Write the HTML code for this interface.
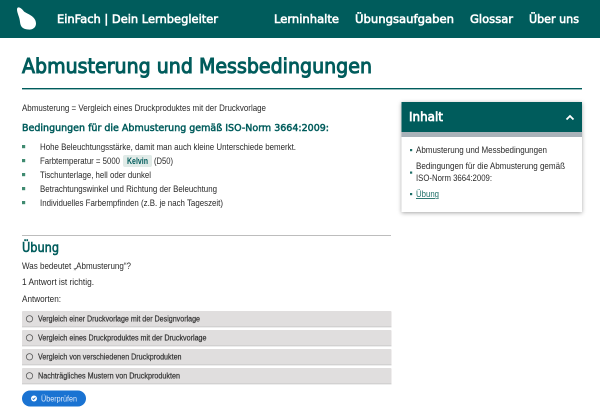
<!DOCTYPE html>
<html lang="de">
<head>
<meta charset="utf-8">
<title>Abmusterung und Messbedingungen</title>
<style>
html,body{margin:0;padding:0;background:#fff;width:600px;height:419px;overflow:hidden}
svg{display:block}
text{font-family:"Liberation Sans",sans-serif;fill:#2a2a2a;font-size:9.2px}
.q{font-family:"DejaVu Sans",sans-serif;paint-order:stroke}
.h{fill:#fff;stroke:#fff;stroke-width:.6px;font-size:11.5px}
.t{fill:#005c5c;stroke:#005c5c}
.a{font-size:8px;fill:#333;stroke:#333;stroke-width:.2px}
</style>
</head>
<body>
<svg width="600" height="419" viewBox="0 0 600 419" xmlns="http://www.w3.org/2000/svg">
<defs>
<filter id="s" x="-10%" y="-10%" width="120%" height="125%"><feDropShadow dx="0" dy="1" stdDeviation="2" flood-color="#000" flood-opacity=".35"/></filter>
</defs>
<rect width="600" height="38" fill="#005c5c"/>
<path d="M18 7.500C20 7 22 9 24 11.500C27 14 36 16 36 23.500C36 28 32 30 28 29.500C23 29 20.500 27 20 22C19.600 17 17 13 17 9.500C17 8.500 17.300 7.700 18 7.500Z" fill="#fff"/>
<text class="q h" x="57" y="23" textLength="161" lengthAdjust="spacingAndGlyphs">EinFach | Dein Lernbegleiter</text>
<text class="q h" x="274" y="23" textLength="65" lengthAdjust="spacingAndGlyphs">Lerninhalte</text>
<text class="q h" x="355" y="23" textLength="99" lengthAdjust="spacingAndGlyphs">Übungsaufgaben</text>
<text class="q h" x="470" y="23" textLength="43" lengthAdjust="spacingAndGlyphs">Glossar</text>
<text class="q h" x="529" y="23" textLength="50" lengthAdjust="spacingAndGlyphs">Über uns</text>

<text class="q t" x="22" y="73" style="font-size:20.500px;stroke-width:1px" textLength="350" lengthAdjust="spacingAndGlyphs">Abmusterung und Messbedingungen</text>
<rect x="22" y="88" width="560" height="1.400" fill="#005c5c"/>

<text x="22" y="111" textLength="244" lengthAdjust="spacingAndGlyphs">Abmusterung = Vergleich eines Druckproduktes mit der Druckvorlage</text>
<text class="q t" x="22" y="131" style="font-size:10px;stroke-width:.5px" textLength="307" lengthAdjust="spacingAndGlyphs">Bedingungen für die Abmusterung gemäß ISO-Norm 3664:2009:</text>

<g fill="#3f8a70">
<rect x="22" y="145" width="3.200" height="3.200"/>
<rect x="22" y="159" width="3.200" height="3.200"/>
<rect x="22" y="173" width="3.200" height="3.200"/>
<rect x="22" y="187" width="3.200" height="3.200"/>
<rect x="22" y="201" width="3.200" height="3.200"/>
</g>
<text x="40" y="150" textLength="256" lengthAdjust="spacingAndGlyphs">Hohe Beleuchtungsstärke, damit man auch kleine Unterschiede bemerkt.</text>
<text x="40" y="164" textLength="80" lengthAdjust="spacingAndGlyphs">Farbtemperatur = 5000</text>
<rect x="123" y="155" width="29" height="12" rx="2" fill="#e1ebe8"/>
<text class="t" x="127" y="164" style="font-weight:700;stroke:none" textLength="21" lengthAdjust="spacingAndGlyphs">Kelvin</text>
<text x="154" y="164" textLength="19" lengthAdjust="spacingAndGlyphs">(D50)</text>
<text x="40" y="178" textLength="111" lengthAdjust="spacingAndGlyphs">Tischunterlage, hell oder dunkel</text>
<text x="40" y="192" textLength="177" lengthAdjust="spacingAndGlyphs">Betrachtungswinkel und Richtung der Beleuchtung</text>
<text x="40" y="206" textLength="183" lengthAdjust="spacingAndGlyphs">Individuelles Farbempfinden (z.B. je nach Tageszeit)</text>

<rect x="22" y="235" width="369" height="1" fill="#bdbdbd"/>
<text class="q t" x="22" y="252" style="font-size:13px;stroke-width:.6px" textLength="37" lengthAdjust="spacingAndGlyphs">Übung</text>
<text x="22" y="269" textLength="109" lengthAdjust="spacingAndGlyphs">Was bedeutet „Abmusterung“?</text>
<text x="22" y="285" textLength="72" lengthAdjust="spacingAndGlyphs">1 Antwort ist richtig.</text>
<text x="22" y="302" textLength="39" lengthAdjust="spacingAndGlyphs">Antworten:</text>

<g fill="#e0dede">
<rect x="22" y="311" width="369.500" height="16" rx="1"/>
<rect x="22" y="330" width="369.500" height="16" rx="1"/>
<rect x="22" y="349" width="369.500" height="16" rx="1"/>
<rect x="22" y="368" width="369.500" height="16" rx="1"/>
</g>
<g fill="#c4c4c4">
<rect x="22" y="326.500" width="369.500" height="0.800"/>
<rect x="22" y="345.500" width="369.500" height="0.800"/>
<rect x="22" y="364.500" width="369.500" height="0.800"/>
<rect x="22" y="383.500" width="369.500" height="0.800"/>
</g>
<g fill="none" stroke="#5a5a5a" stroke-width="0.800">
<circle cx="29.500" cy="318.800" r="3.200"/>
<circle cx="29.500" cy="337.800" r="3.200"/>
<circle cx="29.500" cy="356.800" r="3.200"/>
<circle cx="29.500" cy="375.800" r="3.200"/>
</g>
<text class="a" x="38" y="321.500" textLength="162" lengthAdjust="spacingAndGlyphs">Vergleich einer Druckvorlage mit der Designvorlage</text>
<text class="a" x="38" y="340.500" textLength="168.500" lengthAdjust="spacingAndGlyphs">Vergleich eines Druckproduktes mit der Druckvorlage</text>
<text class="a" x="38" y="359.500" textLength="143.500" lengthAdjust="spacingAndGlyphs">Vergleich von verschiedenen Druckprodukten</text>
<text class="a" x="38" y="378.500" textLength="142" lengthAdjust="spacingAndGlyphs">Nachträgliches Mustern von Druckprodukten</text>

<rect x="22" y="390.500" width="64" height="16" rx="8" fill="#1a73d2"/>
<circle cx="34" cy="398.500" r="3" fill="#fff"/>
<path d="M32.600 398.500l1 1 1.800-1.900" fill="none" stroke="#1a73d2" stroke-width="0.900"/>
<text x="41" y="401.500" style="font-size:8px;fill:#dfeafa" textLength="36" lengthAdjust="spacingAndGlyphs">Überprüfen</text>

<rect x="401.500" y="102" width="180.500" height="110" fill="#fff" filter="url(#s)"/>
<rect x="401.500" y="102" width="180.500" height="30" fill="#005c5c"/>
<rect x="401.500" y="132" width="180.500" height="5" fill="#a9b2b9"/>
<text class="q h" x="409" y="121" style="font-size:12.500px;stroke-width:.7px" textLength="34" lengthAdjust="spacingAndGlyphs">Inhalt</text>
<path d="M566.500 119.500l3.500-3.500 3.500 3.500" fill="none" stroke="#fff" stroke-width="1.800"/>
<g fill="#1f6f68">
<rect x="410" y="149" width="2.200" height="2.200"/>
<rect x="410" y="171.500" width="2.200" height="2.200"/>
<rect x="410" y="193" width="2.200" height="2.200"/>
</g>
<text x="416" y="153" textLength="131" lengthAdjust="spacingAndGlyphs">Abmusterung und Messbedingungen</text>
<text x="416" y="169" textLength="149" lengthAdjust="spacingAndGlyphs">Bedingungen für die Abmusterung gemäß</text>
<text x="416" y="181" textLength="76" lengthAdjust="spacingAndGlyphs">ISO-Norm 3664:2009:</text>
<text x="416" y="197" style="fill:#1f6f68" text-decoration="underline" textLength="23" lengthAdjust="spacingAndGlyphs">Übung</text>
</svg>
</body>
</html>
